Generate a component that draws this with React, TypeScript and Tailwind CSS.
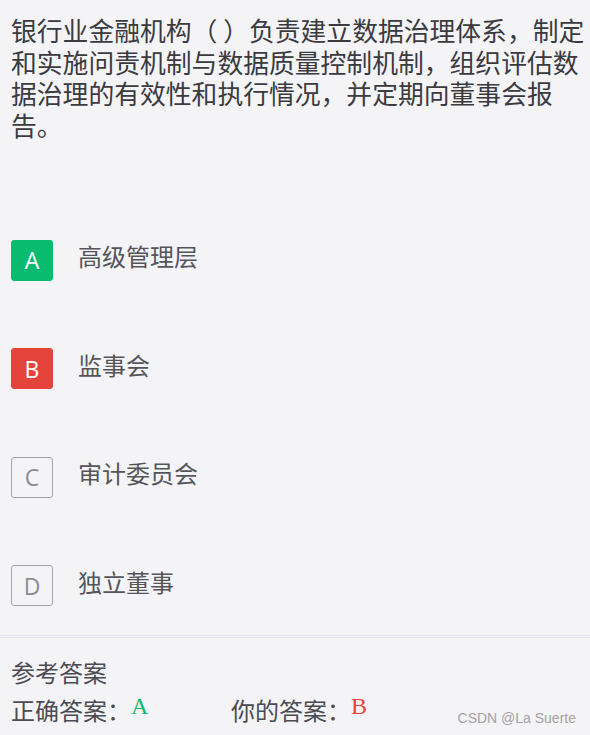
const cjk = { fontFamily: '"Noto Sans CJK SC", "Noto Sans", sans-serif' }

type Option = { key: string; text: string; state: 'correct' | 'wrong' | 'none' }

const options: Option[] = [
  { key: 'A', text: '高级管理层', state: 'correct' },
  { key: 'B', text: '监事会', state: 'wrong' },
  { key: 'C', text: '审计委员会', state: 'none' },
  { key: 'D', text: '独立董事', state: 'none' },
]

function OptionBox({ opt }: { opt: Option }) {
  const cls =
    opt.state === 'correct'
      ? 'bg-[#08bb6e] text-white border-[#08bb6e]'
      : opt.state === 'wrong'
        ? 'bg-[#e5443d] text-white border-[#e5443d]'
        : 'bg-transparent text-[#8c8c93] border-[#a3a3a9]'
  return (
    <div
      className={`w-[42px] h-[41px] shrink-0 rounded-[3px] border flex items-center justify-center text-[23px] ${cls}`}
      style={{ fontFamily: '"Open Sans", "Noto Sans", sans-serif' }}
    >
      {opt.key}
    </div>
  )
}

export default function App() {
  return (
    <div className="relative w-[590px] h-[735px] bg-[#f4f4f7] overflow-hidden" style={cjk}>
      {/* ── Question ───────────────────────────────────────────── */}
      <p className="pt-[14px] pl-[11px] pr-[1px] text-[25.8px] leading-[31.7px] text-[#3a3a3f]">
        银行业金融机构（ ）负责建立数据治理体系，制定和实施问责机制与数据质量控制机制，组织评估数据治理的有效性和执行情况，并定期向董事会报告。
      </p>

      {/* ── Options ────────────────────────────────────────────── */}
      <div className="mt-[99px] pl-[11px] flex flex-col gap-[67.5px]">
        {options.map((opt) => (
          <div key={opt.key} className="flex items-center gap-[25px]">
            <OptionBox opt={opt} />
            <span className="text-[24px] leading-[32px] text-[#54545b] -mt-[8px]">{opt.text}</span>
          </div>
        ))}
      </div>

      {/* ── Answer ─────────────────────────────────────────────── */}
      <div className="mt-[29px] border-t border-[#e3e1ea] h-[2px]" />
      <div className="border-t border-[#e3e1ea]" />
      <div className="pl-[11px] pt-[18px] text-[24px] leading-[32px] text-[#4b4b52]">
        <p>参考答案</p>
        <div className="flex mt-[6px]">
          <div className="w-[220px] flex">
            <span>正确答案：</span>
            <span
              className="text-[#08bb6e] -mt-[4px]"
              style={{ fontFamily: '"Liberation Serif", serif' }}
            >
              A
            </span>
          </div>
          <div className="flex">
            <span>你的答案：</span>
            <span
              className="text-[#e5443d] -mt-[4px]"
              style={{ fontFamily: '"Liberation Serif", serif' }}
            >
              B
            </span>
          </div>
        </div>
      </div>

      <span
        className="absolute right-[14px] bottom-[6px] text-[14px] text-[#a2a2a6]"
        style={{ fontFamily: '"Liberation Sans", Arial, sans-serif' }}
      >
        CSDN @La Suerte
      </span>
    </div>
  )
}
